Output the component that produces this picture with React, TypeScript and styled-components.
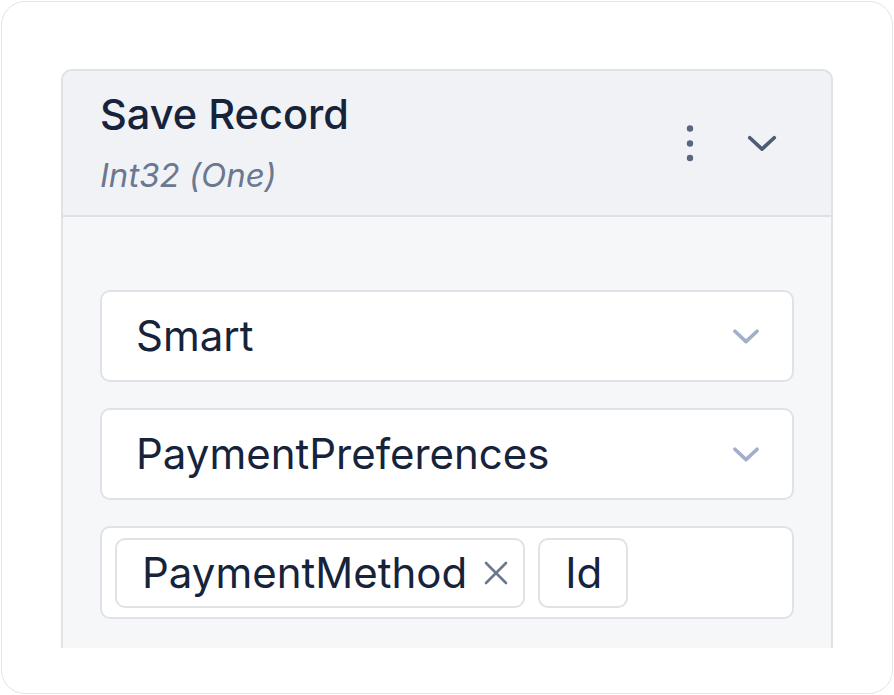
import React from "react";
import styled, { createGlobalStyle } from "styled-components";

const GlobalStyle = createGlobalStyle`
  html, body {
    margin: 0;
    padding: 0;
    background: #ffffff;
  }
  body {
    font-family: Inter, "Noto Sans", sans-serif;
    color: #16233b;
  }
`;

const ChevronDown: React.FC<{ size: number; color: string; stroke: number }> = ({
  size,
  color,
  stroke,
}) => (
  <svg width={size} height={size} viewBox="0 0 24 24" fill="none">
    <path
      d="M5 9l7 6.5L19 9"
      stroke={color}
      strokeWidth={stroke}
      strokeLinecap="round"
      strokeLinejoin="round"
    />
  </svg>
);

const Kebab = () => (
  <svg width="12" height="40" viewBox="0 0 12 40">
    <circle cx="6" cy="5.5" r="3.2" fill="#5a6780" />
    <circle cx="6" cy="20.5" r="3.2" fill="#5a6780" />
    <circle cx="6" cy="35" r="3.2" fill="#5a6780" />
  </svg>
);

const CloseX = () => (
  <svg width="26" height="26" viewBox="0 0 26 26" fill="none">
    <path
      d="M3 3L23 23M23 3L3 23"
      stroke="#6b7890"
      strokeWidth="2.6"
      strokeLinecap="round"
    />
  </svg>
);

const App: React.FC = () => {
  return (
    <>
      <GlobalStyle />
      <Frame>
        <Clip>
          <Panel>
            <Header>
              <Titles>
                <Title>Save Record</Title>
                <Subtitle>Int32 (One)</Subtitle>
              </Titles>
              <Actions>
                <IconButton>
                  <Kebab />
                </IconButton>
                <IconButton>
                  <ChevronDown size={42} color="#4e5c75" stroke={2.1} />
                </IconButton>
              </Actions>
            </Header>
            <Body>
              <Select>
                <SelectText>Smart</SelectText>
                <ChevronDown size={38} color="#a3aecb" stroke={2.3} />
              </Select>
              <Select>
                <SelectText>PaymentPreferences</SelectText>
                <ChevronDown size={38} color="#a3aecb" stroke={2.3} />
              </Select>
              <TagBox>
                <Chip>
                  <ChipText>PaymentMethod</ChipText>
                  <CloseX />
                </Chip>
                <Chip $plain>
                  <ChipText>Id</ChipText>
                </Chip>
              </TagBox>
            </Body>
          </Panel>
        </Clip>
      </Frame>
    </>
  );
};

export default App;

const Frame = styled.div`
  box-sizing: border-box;
  margin: 1px;
  width: 892px;
  height: 693px;
  border: 1.5px solid #e2e4e9;
  border-radius: 24px;
  padding: 67px 58px 45px 59px;
  background: #ffffff;
`;

const Clip = styled.div`
  height: 100%;
  overflow: hidden;
`;

const Panel = styled.div`
  box-sizing: border-box;
  width: 772px;
  min-height: 100%;
  border: 2px solid #dfe2e7;
  border-bottom: none;
  border-radius: 11px 11px 0 0;
  background: #f6f7f9;
`;

const Header = styled.div`
  display: flex;
  align-items: center;
  justify-content: space-between;
  height: 144px;
  padding: 0 48px 0 37px;
  background: #f0f2f5;
  border-bottom: 2px solid #dde0e6;
  border-radius: 9px 9px 0 0;
`;

const Titles = styled.div`
  display: flex;
  flex-direction: column;
  gap: 19px;
  margin-top: -2px;
`;

const Title = styled.div`
  font-size: 41.5px;
  font-weight: 500;
  line-height: 46px;
  color: #16233b;
`;

const Subtitle = styled.div`
  font-size: 33px;
  font-style: italic;
  line-height: 38px;
  color: #6a7891;
`;

const Actions = styled.div`
  display: flex;
  align-items: center;
  gap: 45px;
`;

const IconButton = styled.div`
  display: flex;
  align-items: center;
  justify-content: center;
`;

const Body = styled.div`
  display: flex;
  flex-direction: column;
  gap: 26px;
  padding: 73px 37px 40px;
`;

const Select = styled.div`
  box-sizing: border-box;
  display: flex;
  align-items: center;
  justify-content: space-between;
  height: 92px;
  padding: 0 27px 0 34px;
  background: #ffffff;
  border: 2px solid #dfe2e7;
  border-radius: 10px;
`;

const SelectText = styled.span`
  font-size: 42px;
  line-height: 1;
  color: #16233b;
`;

const TagBox = styled.div`
  box-sizing: border-box;
  display: flex;
  align-items: center;
  gap: 13px;
  height: 93px;
  padding: 0 13px;
  background: #ffffff;
  border: 2px solid #dfe2e7;
  border-radius: 10px;
`;

const Chip = styled.div<{ $plain?: boolean }>`
  box-sizing: border-box;
  display: flex;
  align-items: center;
  gap: 16px;
  height: 70px;
  padding: ${(p) => (p.$plain ? "0 24px 0 25px" : "0 14px 0 25px")};
  background: #ffffff;
  border: 2px solid #dfe2e7;
  border-radius: 10px;
`;

const ChipText = styled.span`
  font-size: 42px;
  line-height: 1;
  color: #16233b;
`;
